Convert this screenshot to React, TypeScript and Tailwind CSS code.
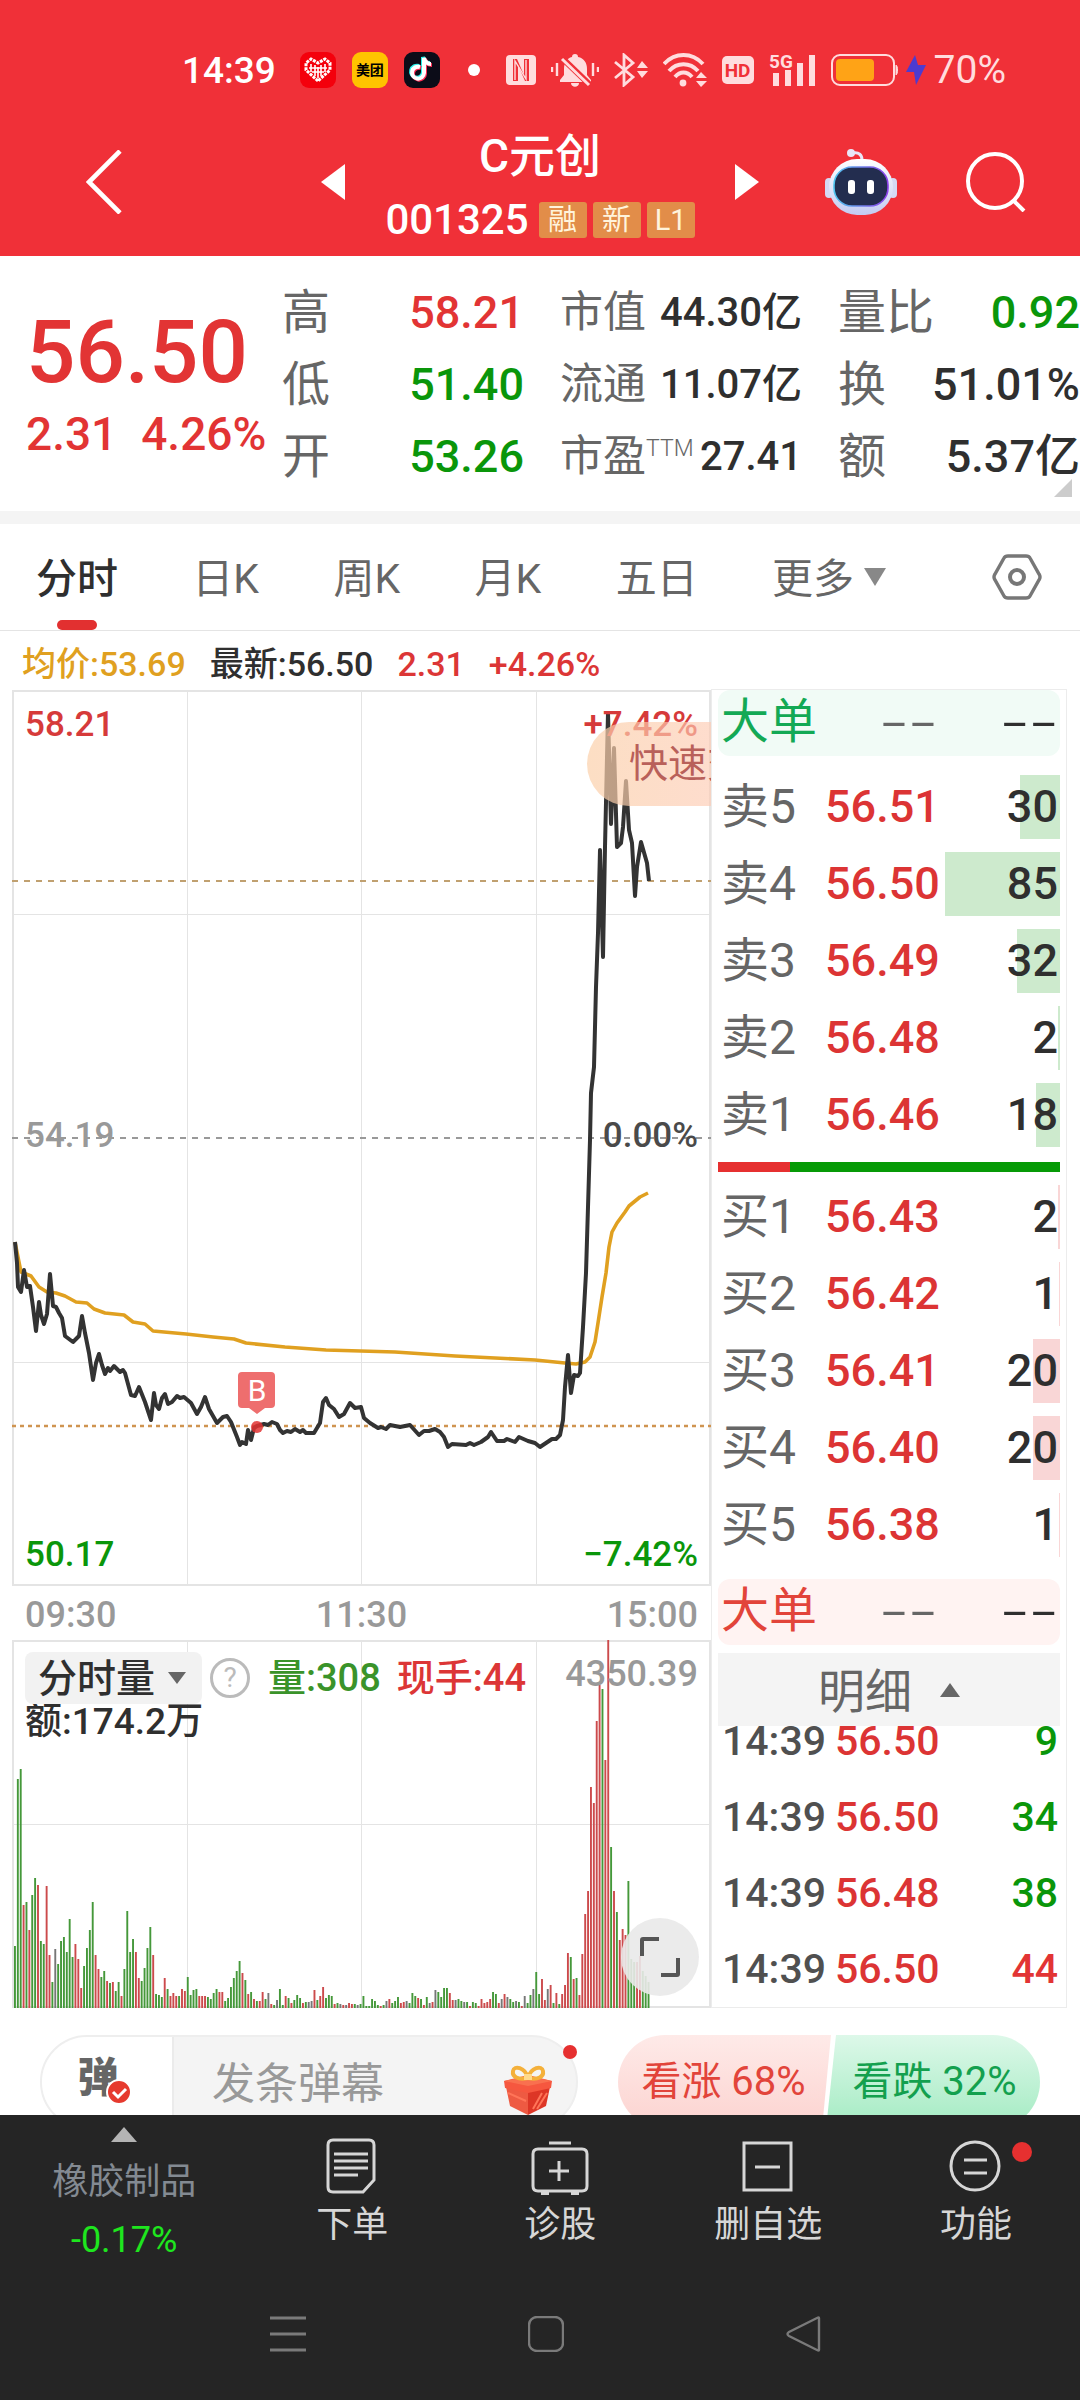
import React from "react";

type Tone = "up" | "down" | "flat";

const toneClass: Record<Tone, string> = {
  up: "text-[#e23434]",
  down: "text-[#0a960a]",
  flat: "text-[#2f2f2f]",
};

const stats: { label: string; sup?: string; value: string; tone: Tone; small?: boolean }[] = [
  { label: "高", value: "58.21", tone: "up" },
  { label: "市值", value: "44.30亿", tone: "flat", small: true },
  { label: "量比", value: "0.92", tone: "down" },
  { label: "低", value: "51.40", tone: "down" },
  { label: "流通", value: "11.07亿", tone: "flat", small: true },
  { label: "换", value: "51.01%", tone: "flat" },
  { label: "开", value: "53.26", tone: "down" },
  { label: "市盈", sup: "TTM", value: "27.41", tone: "flat", small: true },
  { label: "额", value: "5.37亿", tone: "flat" },
];

const tabs = ["分时", "日K", "周K", "月K", "五日"];

const asks = [
  { name: "卖5", price: "56.51", qty: 30, bar: 40 },
  { name: "卖4", price: "56.50", qty: 85, bar: 115 },
  { name: "卖3", price: "56.49", qty: 32, bar: 43 },
  { name: "卖2", price: "56.48", qty: 2, bar: 2 },
  { name: "卖1", price: "56.46", qty: 18, bar: 24 },
];

const bids = [
  { name: "买1", price: "56.43", qty: 2, bar: 2 },
  { name: "买2", price: "56.42", qty: 1, bar: 1 },
  { name: "买3", price: "56.41", qty: 20, bar: 27 },
  { name: "买4", price: "56.40", qty: 20, bar: 27 },
  { name: "买5", price: "56.38", qty: 1, bar: 1 },
];

const ticks: { time: string; price: string; qty: number; tone: Tone }[] = [
  { time: "14:39", price: "56.50", qty: 9, tone: "down" },
  { time: "14:39", price: "56.50", qty: 34, tone: "down" },
  { time: "14:39", price: "56.48", qty: 38, tone: "down" },
  { time: "14:39", price: "56.50", qty: 44, tone: "up" },
];

const pricePoints =
  "15,1242 17,1263 18,1287 21,1292 24,1270 27,1287 30,1286 33,1307 36,1331 39,1302 41,1315 44,1324 47,1314 50,1274 53,1306 56,1307 59,1313 62,1318 65,1336 69,1339 73,1342 79,1336 82,1316 85,1333 89,1353 93,1380 96,1363 99,1354 102,1365 105,1374 108,1368 110,1371 114,1366 117,1369 120,1372 123,1370 125,1373 131,1395 135,1396 139,1387 145,1402 151,1420 154,1393 156,1405 159,1409 162,1398 165,1394 168,1404 172,1402 177,1396 180,1398 184,1397 191,1403 197,1414 201,1407 205,1397 209,1409 217,1423 223,1417 227,1416 231,1422 237,1437 240,1445 242,1442 246,1444 248,1430 251,1440 254,1428 257,1426 264,1424 268,1425 272,1422 277,1424 280,1430 283,1433 287,1431 291,1432 295,1429 300,1432 303,1430 306,1433 314,1433 317,1428 320,1423 323,1402 326,1398 329,1405 334,1409 339,1417 344,1414 350,1403 355,1408 361,1407 364,1418 370,1423 378,1428 381,1427 386,1429 390,1425 400,1427 410,1425 419,1435 424,1431 429,1431 435,1429 440,1432 444,1437 448,1447 452,1444 466,1445 470,1443 474,1445 481,1442 488,1437 491,1432 497,1441 504,1441 507,1439 515,1442 519,1437 528,1441 535,1443 540,1447 546,1443 552,1439 556,1439 560,1435 563,1420 565,1387 568,1355 571,1393 574,1375 578,1376 580,1373 583,1327 586,1273 588,1207 590,1140 591,1093 594,1067 596,987 598,933 600,850 603,957 605,847 608,713 611,824 614,748 617,847 621,843 623,827 626,781 629,830 632,843 635,896 637,867 641,842 647,863 649,881";

const averagePoints =
  "15,1242 18,1257 21,1272 31,1276 39,1287 47,1292 56,1293 65,1296 76,1302 87,1303 94,1309 105,1313 124,1315 133,1322 145,1324 153,1331 186,1334 213,1337 234,1339 246,1343 285,1347 326,1350 395,1352 455,1356 535,1360 565,1363 576,1364 585,1362 590,1357 595,1342 598,1323 602,1297 606,1273 609,1247 612,1232 617,1223 625,1212 629,1206 640,1197 648,1193";

// one entry per minute: g = falling, r = rising, k = unchanged
const volumes =
  "g62 g229 g239 r103 g106 r78 g113 g130 r123 g67 g64 r122 r53 g26 k59 g44 g67 g71 g56 g89 g51 r64 r49 r20 g42 g60 g78 g106 r53 r39 g31 g37 r27 g25 r26 g17 g26 r12 g39 g97 g56 g69 r56 r30 g27 g40 g60 g81 r53 g14 g13 g11 r30 g19 r12 r15 r12 g12 r19 r17 g31 g13 g18 g19 r12 r12 r12 g11 g9 g15 g19 r16 r16 g7 g10 g21 g30 g37 g47 r35 g28 r14 g16 r9 g7 r7 r16 g9 k15 r4 g3 k8 g19 g3 r12 g10 r5 g8 g13 g10 r5 g6 k6 k7 r18 g8 r12 r21 g10 g13 g12 r4 g5 k4 r3 k3 r5 r4 g4 k3 g4 g12 g2 g2 g9 g7 g3 r2 g3 k7 r9 g5 g7 g11 r5 r6 k7 g5 g15 g12 r10 g9 r3 g11 k5 r6 k18 g16 g11 g20 g20 r15 r8 k8 g9 g7 k6 g6 r2 g6 g5 r2 r9 r5 r6 r9 g16 g14 r5 k9 r14 k11 g9 g6 k7 g6 r2 k12 g5 g13 k19 g36 g14 r29 r8 k19 r23 g5 r15 g4 r14 r23 r55 g51 r29 g30 r13 r54 r94 r117 r221 r205 r287 r323 g319 r248 r369 g161 r117 g96 r68 r79 r73 g127 g49 g46 r46 r52 g37 g32 g26"
    .split(" ")
    .map((v) => ({ kind: v[0], height: Number(v.slice(1)) }));

const volumeFill: Record<string, string> = { g: "#45983a", r: "#cc4a4c", k: "#777777" };

function StatusBar() {
  return (
    <div className="flex h-[112px] items-center justify-between pt-7 pr-[74px] pl-[182px] text-white">
      <div className="flex items-center gap-4">
        <span className="mr-2 text-[37px] leading-none font-medium">14:39</span>
        <svg className="size-9" viewBox="0 0 36 36">
          <rect width="36" height="36" rx="9" fill="#f4000c" />
          <path
            d="M18 29 6 18V11l5-4 7 4 7-4 5 4v7z"
            fill="none"
            stroke="#fff"
            strokeWidth="3"
            strokeDasharray="3 1"
          />
          <path d="M11 12v8M15 13v11M18 15v11M21 13v11M25 12v8M9 16h18M12 20h12" stroke="#fff" strokeWidth="1.6" />
        </svg>
        <span className="flex size-9 items-center justify-center rounded-[9px] bg-[#ffc300] text-[14px] leading-none font-bold text-black">
          美团
        </span>
        <svg className="size-9" viewBox="0 0 36 36">
          <rect width="36" height="36" rx="9" fill="#0c0c18" />
          <g fill="none" strokeWidth="4">
            <path d="M16 15a6 6 0 1 0 4 6V6c1 4 3 6 7 6" stroke="#2af0ea" transform="translate(-1 -1)" />
            <path d="M16 15a6 6 0 1 0 4 6V6c1 4 3 6 7 6" stroke="#fe2c55" transform="translate(1 1)" />
            <path d="M16 15a6 6 0 1 0 4 6V6c1 4 3 6 7 6" stroke="#fff" />
          </g>
        </svg>
        <span className="ml-3 size-3 rounded-full bg-white" />
      </div>

      <div className="flex items-center gap-[15px] text-[#ffdcde]">
        <svg className="h-[30px] w-[30px]" viewBox="0 0 30 30">
          <rect width="30" height="30" rx="4" fill="currentColor" />
          <path d="M7 26V4h4l7 16V4h5v22h-4L12 10v16z" fill="#f03038" />
          <path d="M9 25V6l11 18V5" fill="none" stroke="currentColor" strokeWidth="1.4" />
        </svg>
        <svg className="h-[34px] w-12" viewBox="0 0 48 34">
          <path
            d="M24 1c2 0 3 1 3 3 6 1 9 6 9 12v6l4 5v2H9v-2l4-5v-6c0-6 3-11 8-12 0-2 1-3 3-3zM20 30h8c0 5-8 5-8 0z"
            fill="currentColor"
          />
          <path d="m10 4 29 28" stroke="#f03038" strokeWidth="6" />
          <path d="m11 6 27 26" stroke="currentColor" strokeWidth="3" />
          <path d="M1 14v5M6 10v13M42 10v13M47 14v5" stroke="currentColor" strokeWidth="2.4" />
        </svg>
        <svg className="h-[34px] w-[34px]" viewBox="0 0 34 34">
          <path d="m1 9 18 15-9 8V2l9 8L1 25" fill="none" stroke="currentColor" strokeWidth="2.8" />
          <path d="m28 8 6 7H23zM28 25l6-7H23z" fill="currentColor" />
        </svg>
        <svg className="h-[34px] w-11" viewBox="0 0 44 34">
          <g fill="none" stroke="currentColor" strokeWidth="4">
            <path d="M1 11c11-12 28-12 39 0" />
            <path d="M6 18c8-9 21-9 29 0" />
            <path d="M12 24c5-6 12-6 17 0" />
          </g>
          <circle cx="20" cy="30" r="3.4" fill="currentColor" />
          <path d="m38 19 6 6H33zM38 34l6-6H33z" fill="currentColor" />
        </svg>
        <span className="flex h-[28px] w-8 items-center justify-center rounded-[5px] bg-[#ffdcde] text-[19px] leading-none font-bold text-[#f03038]">
          HD
        </span>
        <svg className="h-[34px] w-[47px]" viewBox="0 0 47 34">
          <text x="0" y="15" fontSize="19" fontWeight="700" fill="currentColor">
            5G
          </text>
          <path d="M4 20h6v13H4zM16 17h6v16h-6zM28 10h6v23h-6zM40 2h6v31h-6z" fill="currentColor" />
        </svg>
        <div className="flex items-center gap-2">
          <svg className="h-8 w-[67px]" viewBox="0 0 67 32">
            <rect x="1" y="1" width="62" height="30" rx="8" fill="none" stroke="currentColor" strokeWidth="2" />
            <rect x="5" y="5" width="38" height="22" rx="4" fill="#ffa316" />
            <path d="M65 11c2 1 2 9 0 10z" fill="currentColor" stroke="currentColor" />
          </svg>
          <svg className="h-[30px] w-5" viewBox="0 0 20 30">
            <path d="M9 0 0 17h8l2 13 10-20h-8z" fill="#4d3bd0" />
          </svg>
          <span className="text-[39px] leading-none">70%</span>
        </div>
      </div>
    </div>
  );
}

function RobotIcon() {
  return (
    <svg className="h-[67px] w-[72px]" viewBox="0 0 72 67">
      <defs>
        <linearGradient id="robotHead" x1="0" y1="0" x2="0" y2="1">
          <stop offset="0" stopColor="#fff" />
          <stop offset="1" stopColor="#c3cbf2" />
        </linearGradient>
        <linearGradient id="robotRim" x1="0" y1="0" x2="1" y2="0">
          <stop offset="0" stopColor="#4fc4ee" />
          <stop offset="1" stopColor="#8b3fe8" />
        </linearGradient>
      </defs>
      <path d="M28 4c6-1 9 2 9 7" fill="none" stroke="#e9e6f8" strokeWidth="3" />
      <circle cx="26" cy="4" r="4" fill="#e9e6f8" />
      <rect x="0" y="29" width="8" height="20" rx="4" fill="#d5d9f4" />
      <rect x="64" y="29" width="8" height="20" rx="4" fill="#d5d9f4" />
      <rect x="4" y="10" width="64" height="56" rx="28" fill="url(#robotHead)" />
      <rect x="9" y="18" width="54" height="39" rx="18" fill="#232d4f" stroke="url(#robotRim)" strokeWidth="1.6" />
      <rect x="23" y="31" width="7" height="14" rx="3" fill="#fff" />
      <rect x="42" y="31" width="7" height="14" rx="3" fill="#fff" />
    </svg>
  );
}

function StockHeader() {
  return (
    <div className="grid h-36 grid-cols-[1fr_auto_1fr] items-center pb-1 text-white">
      <div className="pl-[86px]">
        <button aria-label="返回" className="block">
          <svg className="h-16 w-9" viewBox="0 0 36 64">
            <path d="M34 1 3 32l31 31" fill="none" stroke="#fff" strokeWidth="4.6" />
          </svg>
        </button>
      </div>

      <div className="flex w-[438px] items-center justify-between">
        <button aria-label="上一只">
          <svg className="h-9 w-6" viewBox="0 0 24 36">
            <path d="M24 0v36L0 18z" fill="#fff" />
          </svg>
        </button>
        <div className="flex flex-col items-center gap-4">
          <h1 className="text-[46px] leading-[60px] font-medium">C元创</h1>
          <div className="flex items-center gap-[6px]">
            <span className="mr-1 text-[42px] leading-9 font-medium">001325</span>
            {["融", "新", "L1"].map((tag) => (
              <span
                key={tag}
                className="flex h-9 w-12 items-center justify-center rounded-[3px] bg-[#e28d49] text-[29px] leading-none text-[#fff4dc]"
              >
                {tag}
              </span>
            ))}
          </div>
        </div>
        <button aria-label="下一只">
          <svg className="h-9 w-6" viewBox="0 0 24 36">
            <path d="M0 0v36l24-18z" fill="#fff" />
          </svg>
        </button>
      </div>

      <div className="flex items-center justify-between pr-[54px] pl-[66px]">
        <button aria-label="智能助手">
          <RobotIcon />
        </button>
        <button aria-label="搜索">
          <svg className="size-[60px]" viewBox="0 0 60 60">
            <circle cx="29" cy="29" r="27" fill="none" stroke="#fff" strokeWidth="4" />
            <path d="m47 48 11 11" stroke="#fff" strokeWidth="4" />
          </svg>
        </button>
      </div>
    </div>
  );
}

function Quote() {
  return (
    <section className="relative flex h-[255px] items-center bg-white">
      <div className="w-[282px] shrink-0 pt-1 pl-[26px] font-medium text-[#e23434]">
        <div className="text-[87px] leading-[88px]">56.50</div>
        <div className="flex gap-6 pt-2 text-[46px] leading-[60px] whitespace-nowrap">
          <span>2.31</span>
          <span>4.26%</span>
        </div>
      </div>
      <dl className="grid flex-1 grid-cols-3 gap-x-9">
        {stats.map((s) => (
          <div key={s.label} className="flex h-[72px] items-center justify-between pt-[2px] whitespace-nowrap">
            <dt className={s.small ? "flex text-[43px] leading-none text-[#666]" : "text-[48px] leading-none text-[#666]"}>
              {s.label}
              {s.sup && <span className="text-[23px] leading-7 font-light">{s.sup}</span>}
            </dt>
            <dd
              className={`${toneClass[s.tone]} leading-none font-medium ${s.small ? "text-[40px]" : "text-[45px]"}`}
            >
              {s.value}
            </dd>
          </div>
        ))}
      </dl>
      <svg className="absolute right-2 bottom-[14px] size-[18px]" viewBox="0 0 18 18">
        <path d="M18 0v18H0z" fill="#ccc" />
      </svg>
    </section>
  );
}

function PeriodTabs() {
  return (
    <nav className="flex h-[107px] items-stretch justify-between border-b border-[#e4e4e4] pr-[38px] pl-9 text-[41px] leading-none text-[#666]">
      <div className="flex w-[850px] justify-between">
        {tabs.map((tab, i) => (
          <button
            key={tab}
            className={i === 0 ? "relative pt-1 font-medium text-[#2f2f2f]" : "relative pt-1"}
          >
            {tab}
            {i === 0 && (
              <span className="absolute bottom-0 left-1/2 h-[10px] w-10 -translate-x-1/2 rounded-[5px] bg-[#e23030]" />
            )}
          </button>
        ))}
        <button className="flex items-center gap-[10px] pt-1">
          更多
          <svg className="mb-1 h-[18px] w-[22px]" viewBox="0 0 22 18">
            <path d="M0 0h22L11 18z" fill="#888" />
          </svg>
        </button>
      </div>
      <button aria-label="设置">
        <svg className="h-[46px] w-[50px]" viewBox="0 0 50 46">
          <path
            d="M16 2h18q3 0 4 2l9 16q2 3 0 6l-9 16q-1 2-4 2H16q-3 0-4-2L3 26q-2-3 0-6l9-16q1-2 4-2z"
            fill="none"
            stroke="#777"
            strokeWidth="3.4"
          />
          <circle cx="25" cy="23" r="7" fill="none" stroke="#777" strokeWidth="4" />
        </svg>
      </button>
    </nav>
  );
}

function PriceChart() {
  return (
    <div className="relative h-[896px] overflow-hidden text-[35px] leading-10 font-medium">
      <svg className="absolute inset-0 h-full w-full" viewBox="12 690 699 896" preserveAspectRatio="none">
        <g fill="none" stroke="#e4e4e4" strokeWidth="1" shapeRendering="crispEdges">
          <path d="M187 691v894M361 691v894M536 691v894M12 914h699M12 1362h699" />
          <path d="M13 691h697v894H13z" strokeWidth="2" />
        </g>
        <path d="M12 881h699" stroke="#c0a070" strokeWidth="2" strokeDasharray="6 6" />
        <path d="M12 1138h699" stroke="#999" strokeWidth="2" strokeDasharray="6 6" />
        <path d="M12 1426h699" stroke="#cf9450" strokeWidth="2.4" strokeDasharray="4 4" />
        <polyline points={averagePoints} fill="none" stroke="#e0a020" strokeWidth="3.6" strokeLinejoin="round" />
        <polyline points={pricePoints} fill="none" stroke="#333" strokeWidth="4" strokeLinejoin="round" />
        <circle cx="257" cy="1427" r="6" fill="#e23434" fillOpacity="0.85" />
        <path d="M242 1372h29a4 4 0 0 1 4 4v28a4 4 0 0 1-4 4h-6l-8 6-8-6h-7a4 4 0 0 1-4-4v-28a4 4 0 0 1 4-4z" fill="#ee6e6e" />
        <text x="257" y="1401" textAnchor="middle" fontSize="30" fontWeight="400" fill="#fff">
          B
        </text>
      </svg>
      <div className="relative flex h-full flex-col justify-between pt-[15px] pr-[13px] pb-[11px] pl-[13px]">
        <div className="flex justify-between text-[#d63a3a]">
          <span>58.21</span>
          <span>+7.42%</span>
        </div>
        <div className="flex justify-between pb-2">
          <span className="text-[#999]">54.19</span>
          <span className="text-[#4a4a4a]">0.00%</span>
        </div>
        <div className="flex justify-between text-[#0a960a]">
          <span>50.17</span>
          <span>−7.42%</span>
        </div>
      </div>
      <button className="absolute top-8 left-[575px] flex h-[84px] w-[220px] items-center rounded-full bg-linear-to-r from-[#fbd0aa]/70 to-[#ffc4b8]/60 pl-[42px] text-[39px] leading-none font-normal text-[#b9605a]">
        快速交易
      </button>
    </div>
  );
}

function VolumeChart() {
  return (
    <div className="relative h-[368px] text-[36px] leading-9 font-medium">
      <svg className="absolute inset-0 h-full w-full" viewBox="12 1640 699 368" preserveAspectRatio="none">
        <g fill="none" stroke="#e4e4e4" strokeWidth="1" shapeRendering="crispEdges">
          <path d="M187 1640v367M361 1640v367M536 1640v367M12 1824h699" />
          <path d="M13 1641h697v366H13z" strokeWidth="2" />
        </g>
        {volumes.map((v, i) => (
          <rect
            key={i}
            x={14 + i * 2.88}
            y={2008 - v.height}
            width="1.9"
            height={v.height}
            fill={volumeFill[v.kind]}
          />
        ))}
      </svg>
      <div className="relative pt-3 pl-[13px]">
        <div className="flex h-[52px] items-center whitespace-nowrap">
          <div className="relative">
            <select
              aria-label="指标"
              className="h-[52px] w-[177px] appearance-none rounded-[8px] bg-[#f2f2f2] pt-[3px] pl-[13px] text-[39px] leading-[49px] font-medium text-[#2f2f2f]"
            >
              <option>分时量</option>
            </select>
            <svg className="pointer-events-none absolute top-5 right-4 h-3 w-[18px]" viewBox="0 0 18 12">
              <path d="M0 0h18L9 12z" fill="#666" />
            </svg>
          </div>
          <button
            aria-label="说明"
            className="ml-2 flex size-10 items-center justify-center rounded-full border-[3px] border-[#bbb] text-[28px] leading-none font-normal text-[#bbb]"
          >
            ?
          </button>
          <span className="ml-[18px] text-[38px] text-[#3a932a]">量:308</span>
          <span className="ml-4 text-[38px] text-[#dc3636]">现手:44</span>
        </div>
        <div className="text-[37px] text-[#2f2f2f]">额:174.2万</div>
      </div>
      <span className="absolute top-4 right-[13px] text-[#999]">4350.39</span>
      <button
        aria-label="全屏"
        className="absolute right-3 bottom-3 flex size-[78px] items-center justify-center rounded-full bg-[#e9e9e9]/90"
      >
        <svg className="size-10" viewBox="0 0 40 40">
          <path d="M2 19V3q0-1 1-1h16M38 21v16q0 1-1 1H21" fill="none" stroke="#555" strokeWidth="4" />
        </svg>
      </button>
    </div>
  );
}

function BigOrder({ side }: { side: "sell" | "buy" }) {
  const sell = side === "sell";
  return (
    <div
      className={`flex h-[66px] items-start rounded-[12px] pl-[3px] ${
        sell ? "bg-[#f1fbf6] text-[#13a955]" : "bg-[#fff3f2] text-[#e2443a]"
      }`}
    >
      <span className="flex-1 text-[48px] leading-[64px]">大单</span>
      <span className="font-['DejaVu_Sans'] text-[80px] leading-[58px] font-extralight text-[#666]">--</span>
      <span className="ml-[63px] pr-[2px] font-['DejaVu_Sans'] text-[80px] leading-[58px] font-extralight text-[#2f2f2f]">
        --
      </span>
    </div>
  );
}

function Ladder({ rows, barClass }: { rows: typeof asks; barClass: string }) {
  return (
    <table className="w-full table-fixed">
      <tbody>
        {rows.map((row) => (
          <tr key={row.name} className="h-[77px]">
            <th scope="row" className="w-[107px] p-0 pl-[3px] text-left text-[48px] leading-none font-normal text-[#666]">
              {row.name}
            </th>
            <td className="w-[118px] p-0 text-[45px] leading-none font-medium text-[#dc3434]">{row.price}</td>
            <td className="p-0">
              <div className="relative flex h-16 items-center justify-end pr-[2px] text-[45px] leading-none font-medium text-[#2f2f2f]">
                <span className={`absolute inset-y-0 right-0 ${barClass}`} style={{ width: row.bar }} />
                <span className="relative">{row.qty}</span>
              </div>
            </td>
          </tr>
        ))}
      </tbody>
    </table>
  );
}

function OrderBook() {
  return (
    <aside className="flex w-[356px] shrink-0 flex-col border border-[#ececec] px-[6px]">
      <BigOrder side="sell" />
      <div className="pt-3 pb-[9px]">
        <Ladder rows={asks} barClass="bg-[#cdeacd]" />
      </div>
      <div className="flex h-[10px] bg-[#069a06]">
        <div className="w-[21%] bg-[#e63030]" />
      </div>
      <div className="pt-[6px] pb-4">
        <Ladder rows={bids} barClass="bg-[#f9d6d6]" />
      </div>
      <BigOrder side="buy" />
      <button
        aria-expanded="true"
        className="mt-2 flex h-[73px] items-center justify-center gap-7 bg-[#f4f4f4] pt-1 text-[47px] leading-none text-[#666]"
      >
        明细
        <svg className="mb-1 h-[14px] w-5" viewBox="0 0 20 14">
          <path d="M10 0l10 14H0z" fill="#666" />
        </svg>
      </button>
      <div className="flex h-[280px] flex-col justify-end overflow-hidden">
        <table className="w-full table-fixed text-[41px] leading-none font-medium">
          <tbody>
            {ticks.map((t, i) => (
              <tr key={i} className="h-[76px]">
                <td className="w-[117px] p-0 pt-[3px] pl-1 text-[#505050]">{t.time}</td>
                <td className="w-[110px] p-0 pt-[3px] text-[#dc3434]">{t.price}</td>
                <td className={`p-0 pt-[3px] pr-[2px] text-right ${toneClass[t.tone]}`}>{t.qty}</td>
              </tr>
            ))}
          </tbody>
        </table>
      </div>
    </aside>
  );
}

function GiftIcon() {
  return (
    <svg className="h-[50px] w-12" viewBox="0 0 48 50">
      <path d="M1 17 24 22v28L6 41z" fill="#ee5a42" />
      <path d="M47 17 24 22v28l18-9z" fill="#dd3626" />
      <path d="m0 16 24-6 24 6-1 7-23 5-23-5z" fill="#f6573f" />
      <path d="m0 16 24-5 24 5-24 5z" fill="#f9704f" />
      <path d="m29 44 9-16M33 44l10-16M4 28l18 8" stroke="#ff7558" strokeWidth="2" />
      <g fill="none" stroke="#f4b03a" strokeWidth="4">
        <path d="M24 13C14 15 8 12 9 6s12-4 15 7z" />
        <path d="M24 13c10 2 16-1 15-7s-12-4-15 7z" />
      </g>
      <path d="M20 9h8v6h-8z" fill="#ffd98a" />
    </svg>
  );
}

function CommentBar() {
  return (
    <div className="flex h-[107px] items-start justify-between overflow-hidden pt-[27px] pr-10 pl-10">
      <div className="relative flex h-[94px] w-[538px] rounded-full border-2 border-[#eee] bg-[#f4f4f4]">
        <button
          aria-label="弹幕开关"
          className="relative w-[132px] rounded-l-full border-r-2 border-[#ebebeb] bg-white pr-[18px] pb-2 text-[41px] leading-none font-black text-[#666]"
        >
          弹
          <svg className="absolute top-[42px] left-[64px] size-[26px]" viewBox="0 0 26 26">
            <circle cx="13" cy="13" r="12" fill="#e63a2e" stroke="#fff" strokeWidth="2" />
            <path d="m7 13 5 5 8-8" fill="none" stroke="#fff" strokeWidth="3" />
          </svg>
        </button>
        <input
          aria-label="发条弹幕"
          placeholder="发条弹幕"
          className="min-w-0 flex-1 bg-transparent pt-1 pl-[38px] text-[43px] leading-none placeholder:text-[#999]"
        />
        <button aria-label="礼物" className="mr-6 self-start pt-7">
          <GiftIcon />
        </button>
        <span className="absolute top-2 -right-px size-[14px] rounded-full bg-[#e63030]" />
      </div>

      <div className="relative flex h-[94px] w-[422px] overflow-hidden rounded-full text-[40px] leading-none">
        <svg className="absolute inset-0 h-full w-full" viewBox="0 0 422 94" preserveAspectRatio="none">
          <defs>
            <linearGradient id="voteUp" x1="0" y1="0" x2="0" y2="1">
              <stop offset="0" stopColor="#feeae8" />
              <stop offset="1" stopColor="#fcd3d0" />
            </linearGradient>
            <linearGradient id="voteDown" x1="0" y1="0" x2="0" y2="1">
              <stop offset="0" stopColor="#ddf8e9" />
              <stop offset="1" stopColor="#a3ebc2" />
            </linearGradient>
          </defs>
          <path d="M0 0h213l-9 94H0z" fill="url(#voteUp)" />
          <path d="M218 0h204v94H208z" fill="url(#voteDown)" />
        </svg>
        <button className="relative w-[211px] text-[#e2443a]">看涨 68%</button>
        <button className="relative w-[211px] text-[#13a04e]">看跌 32%</button>
      </div>
    </div>
  );
}

function ToolBar() {
  const items = [
    {
      label: "下单",
      icon: (
        <>
          <path d="M10 3h36q5 0 5 5v35L40 55H10q-5 0-5-5V8q0-5 5-5z" />
          <path d="M11 17h34M11 24h34M11 31h34M11 38h24" />
        </>
      ),
    },
    {
      label: "诊股",
      icon: (
        <>
          <path d="M18 6h22M7 12h44q5 0 5 5v32q0 5-5 5H7q-5 0-5-5V17q0-5 5-5zM28 24v20M18 34h20" />
          <path d="M10 56h8M40 56h8" strokeWidth="4" />
        </>
      ),
    },
    { label: "删自选", icon: <path d="M5 6h47v47H5zM16 30h25" /> },
    {
      label: "功能",
      icon: (
        <>
          <circle cx="28" cy="29" r="24" />
          <path d="M17 23h23M17 36h23" />
        </>
      ),
    },
  ];
  return (
    <div className="flex h-[170px] text-[#d6d6d6]">
      <button className="flex w-[23%] flex-col items-center pt-3 leading-none">
        <svg className="h-[15px] w-[26px]" viewBox="0 0 26 15">
          <path d="M13 0l13 15H0z" fill="#b4b4b4" />
        </svg>
        <span className="pt-[22px] text-[36px] leading-[36px] text-[#838a92]">橡胶制品</span>
        <span className="pt-[22px] text-[36px] leading-[36px] text-[#1ee61e]">-0.17%</span>
      </button>
      {items.map((item) => (
        <button key={item.label} className="flex flex-1 flex-col items-center pt-[22px]">
          <span className="relative">
            <svg
              className="h-[60px] w-[58px]"
              viewBox="0 0 58 60"
              fill="none"
              stroke="currentColor"
              strokeWidth="3"
            >
              {item.icon}
            </svg>
            {item.label === "功能" && (
              <span className="absolute top-[5px] -right-[27px] size-5 rounded-full bg-[#e63030]" />
            )}
          </span>
          <span className="pt-2 text-[36px] leading-10">{item.label}</span>
        </button>
      ))}
    </div>
  );
}

function SystemNav() {
  return (
    <div className="flex h-[115px] justify-center gap-[222px] pt-[31px] pl-3 text-[#7a7a7a]">
      <button aria-label="最近任务" className="size-9">
        <svg viewBox="0 0 36 36">
          <path d="M0 2h36M0 18h36M0 34h36" stroke="currentColor" strokeWidth="3" />
        </svg>
      </button>
      <button aria-label="主页" className="size-9">
        <svg viewBox="0 0 36 36">
          <rect x="1" y="1" width="34" height="34" rx="8" fill="none" stroke="currentColor" strokeWidth="2.4" />
        </svg>
      </button>
      <button aria-label="后退" className="size-9">
        <svg viewBox="0 0 36 36">
          <path
            d="M33 2v32q0 1-2 0L3 20q-3-2 0-4L31 2q2-1 2 0z"
            fill="none"
            stroke="currentColor"
            strokeWidth="2.4"
          />
        </svg>
      </button>
    </div>
  );
}

export default function App() {
  return (
    <div className="min-h-screen bg-white font-[Roboto,'Noto_Sans_CJK_SC',sans-serif] text-[#2f2f2f]">
      <header className="bg-[#f03038]">
        <StatusBar />
        <StockHeader />
      </header>
      <Quote />
      <div className="h-[13px] bg-[#f4f4f4]" />
      <PeriodTabs />

      <main className="flex pr-[13px] pl-3">
        <div className="flex-1">
          <div className="flex h-[59px] items-center gap-6 pt-[6px] pl-[10px] text-[34px] leading-none font-medium whitespace-nowrap">
            <span className="text-[#e0a020]">均价:53.69</span>
            <span>最新:56.50</span>
            <span className="text-[#dc3636]">2.31</span>
            <span className="text-[#dc3636]">+4.26%</span>
          </div>
          <PriceChart />
          <div className="flex h-[54px] items-center justify-between pt-1 pr-[13px] pl-[13px] text-[36px] leading-none font-medium text-[#999]">
            <span>09:30</span>
            <span>11:30</span>
            <span>15:00</span>
          </div>
          <VolumeChart />
        </div>
        <div className="flex pt-[58px]">
          <OrderBook />
        </div>
      </main>

      <CommentBar />
      <footer className="bg-[#252525]">
        <ToolBar />
        <SystemNav />
      </footer>
    </div>
  );
}
